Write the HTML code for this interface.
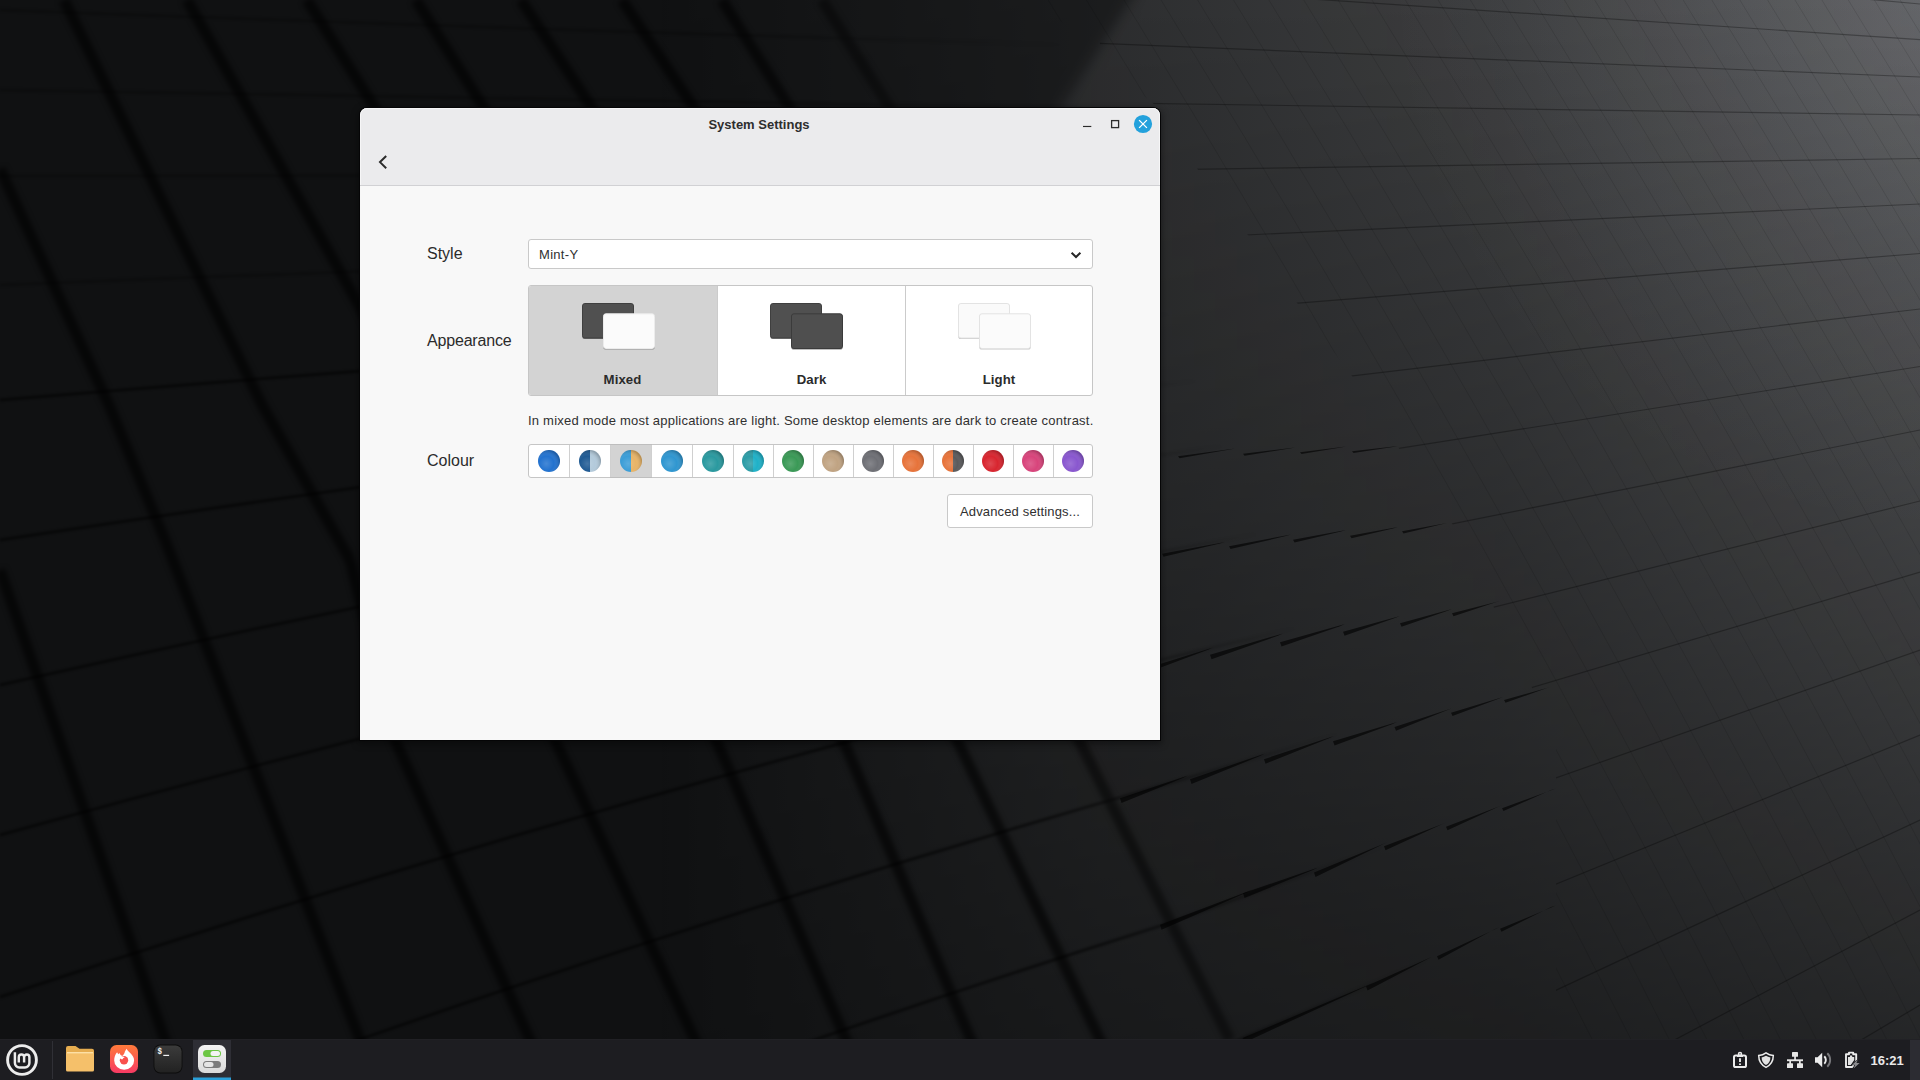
<!DOCTYPE html>
<html lang="en">
<head>
<meta charset="utf-8">
<title>System Settings</title>
<style>
*{box-sizing:border-box;margin:0;padding:0}
html,body{width:1920px;height:1080px;overflow:hidden;background:#101112;font-family:"Liberation Sans",sans-serif;color:#303030}
svg{position:absolute;left:0;top:0;width:1920px;height:1080px;display:block}
#win{position:absolute;left:360px;top:108px;width:800px;height:632px;background:#f8f8f8;border-radius:7px 7px 0 0;overflow:hidden}
#winsh{position:absolute;left:359px;top:107px;width:802px;height:634px;border-radius:8px 8px 0 0;background:#050506;box-shadow:0 2px 7px 1px rgba(0,0,0,.38)}
#hdr{position:absolute;left:0;top:0;width:800px;height:78px;background:#ebebed;border-bottom:1px solid #d1d1d4;border-radius:7px 7px 0 0;box-shadow:inset 0 1px 0 #f5f5f6,inset 1px 0 0 #f6f6f7,inset -1px 0 0 #f6f6f7}
#title{position:absolute;left:0;top:9px;width:798px;text-align:center;font-weight:bold;font-size:13px;color:#2e2e2e;line-height:16px}
.lbl{position:absolute;left:67px;font-size:16px;color:#2b2b2b;line-height:20px}
#combo{position:absolute;left:168px;top:131px;width:565px;height:30px;background:#fff;border:1px solid #c9c9c9;border-radius:3px}
#combo span{position:absolute;left:10px;top:7px;font-size:13px;letter-spacing:.3px;line-height:15px;color:#303030}
#app{position:absolute;left:168px;top:177px;width:565px;height:111px;background:#fff;border:1px solid #c6c6c6;border-radius:3px;overflow:hidden}
.ac{position:absolute;top:0;height:109px;border-left:1px solid #cbcbcb}
.ac b{position:absolute;left:0;right:0;top:86px;text-align:center;font-size:13.2px;letter-spacing:.1px;line-height:16px;color:#2b2b2b}
#desc{position:absolute;left:168px;top:305px;font-size:13px;letter-spacing:.222px;line-height:16px;white-space:nowrap;color:#303030}
#cols{position:absolute;left:168px;top:336px;width:565px;height:34px;background:#fff;border:1px solid #c6c6c6;border-radius:3px}
#adv{position:absolute;left:587px;top:386px;width:146px;height:34px;background:#fff;border:1px solid #c9c9c9;border-radius:3px;font-size:13px;letter-spacing:.15px;line-height:34px;text-align:center;color:#303030}
#panel{position:absolute;left:0;top:1039px;width:1920px;height:41px;background:#1d1d21;border-top:1px solid #212125}
#clock{position:absolute;left:1870.5px;top:13px;font-size:13px;font-weight:bold;color:#e9e9e9;line-height:16px}
</style>
</head>
<body>
<svg id="wall" viewBox="0 0 1920 1080">
<defs>
<linearGradient id="gx" gradientUnits="userSpaceOnUse" x1="641" y1="0" x2="1920" y2="0">
<stop offset="0" stop-color="#eeeff3" stop-opacity="0"/><stop offset=".359" stop-color="#eeeff3" stop-opacity=".13"/><stop offset=".672" stop-color="#eeeff3" stop-opacity=".203"/><stop offset="1" stop-color="#eeeff3" stop-opacity=".325"/></linearGradient>
<radialGradient id="gc" gradientUnits="userSpaceOnUse" cx="1940" cy="-20" r="560"><stop offset="0" stop-color="#e4e9fb" stop-opacity=".09"/><stop offset=".5" stop-color="#e4e9fb" stop-opacity=".035"/><stop offset="1" stop-color="#e4e9fb" stop-opacity="0"/></radialGradient>
<clipPath id="cfine"><polygon points="1040,0 1100,60 1160,109 1200,173 1251,239 1300,307 1352,376 1400,450 1453,525 1510,640 1556,740 1556,1080 1920,1080 1920,0"/></clipPath>
<linearGradient id="gy" gradientUnits="userSpaceOnUse" x1="0" y1="0" x2="0" y2="1080">
<stop offset="0" stop-color="#fff"/><stop offset="1" stop-color="#444"/></linearGradient>
<filter id="b12" x="-10%" y="-10%" width="120%" height="120%"><feGaussianBlur stdDeviation="7"/></filter>
<filter id="b3"><feGaussianBlur stdDeviation="1"/></filter>
<filter id="b1"><feGaussianBlur stdDeviation=".5"/></filter>
<filter id="b5"><feGaussianBlur stdDeviation="2.4"/></filter>
<mask id="mlit" maskUnits="userSpaceOnUse" x="0" y="0" width="1920" height="1080">
<rect width="1920" height="1080" fill="url(#gy)"/>
<polygon points="-50,-50 1164,-50 1059,110 640,750 400,1130 -50,1130" fill="#000" fill-opacity=".62" filter="url(#b12)"/>
</mask>
<linearGradient id="fadeL" gradientUnits="userSpaceOnUse" x1="720" y1="0" x2="1000" y2="-112">
<stop offset="0" stop-color="#fff"/><stop offset="1" stop-color="#000"/></linearGradient>
<mask id="mleft" maskUnits="userSpaceOnUse" x="0" y="0" width="1920" height="1080"><rect width="1920" height="1080" fill="url(#fadeL)"/></mask>
</defs>
<rect width="1920" height="1080" fill="#101112"/>
<rect width="1920" height="1080" fill="url(#gx)" mask="url(#mlit)"/>
<rect x="1300" y="0" width="620" height="620" fill="url(#gc)"/>
<g mask="url(#mleft)" fill="none" stroke="#040405"><g stroke-opacity=".6" stroke-width="11" filter="url(#b5)"><path d="M0 169 L109 405 L165 540"/><path d="M64 0 L262 405 L350 560"/><path d="M187 0 L360 307 L470 520"/><path d="M307 0 L375 108 L600 500"/><path d="M416 0 L484 108 L700 480"/><path d="M521 0 L592 108 L800 470"/><path d="M622 0 L694 108 L900 440"/><path d="M722 0 L790 108 L1000 430"/><path d="M822 0 L890 108 L1100 430"/><path d="M0 570 L165 1040 L180 1085"/><path d="M165 540 L360 1040 L378 1085"/><path d="M350 560 L395 740 L530 1040 L550 1085"/><path d="M470 520 L555 740 L695 1040 L716 1085"/><path d="M600 500 L717 742 L846 1040 L866 1085"/><path d="M700 480 L846 747 L971 1040 L990 1085"/><path d="M800 470 L958 742 L1100 1040 L1120 1085"/><path d="M900 440 L1080 742 L1230 1040"/></g><g stroke-opacity=".22" stroke-width="3" filter="url(#b3)"><path d="M0 10 Q580 31.4 1160 47.5 L1660 67.7"/><path d="M0 90 Q580 100.8 1160 109 L1660 115.3"/><path d="M0 176 Q580 175.4 1160 175 L1660 166.4"/><path d="M0 285 Q580 262.2 1160 245 L1660 220.7"/></g><g stroke-opacity=".5" stroke-width="3" filter="url(#b3)"><path d="M0 400 Q580 351.5 1160 315 L1660 274.9"/><path d="M0 540 Q580 451.6 1160 385 L1660 329.1"/><path d="M0 685 Q580 553.9 1160 455 L1660 383.4"/><path d="M0 835 Q580 673.7 1160 552 L1660 458.5"/><path d="M0 997 Q580 804.9 1160 660 L1660 542.2"/><path d="M0 1170 Q580 951.1 1160 786 L1660 639.8"/><path d="M0 1350 Q580 1108.3 1160 926 L1660 748.3"/><path d="M0 1540 Q580 1273.8 1160 1073 L1660 862.2"/></g></g>
<g fill="#070708" fill-opacity=".62" filter="url(#b1)"><polygon points="1178,456.2 1235,448.5 1230,449.62 1179.5,458.24"/><polygon points="1243,453.7 1295,447.5 1290,448.62 1244.5,455.74"/><polygon points="1300,452.2 1346,446.5 1341,447.558 1301.5,454.116"/><polygon points="1352,451.2 1398,446 1393,446.996 1353.5,452.992"/><polygon points="1162,553.7 1225,542 1220,543.616 1163.5,556.732"/><polygon points="1229,546.2 1291,534.5 1286,536.054 1230.5,549.108"/><polygon points="1293,539.7 1346,530 1341,531.492 1294.5,542.484"/><polygon points="1350,535.7 1398,527 1393,528.43 1351.5,538.36"/><polygon points="1402,531.2 1447,523 1442,524.306 1403.5,533.612"/><polygon points="1140,670.2 1213,647.5 1208,649.86 1141.5,674.72"/><polygon points="1210,654.7 1283,633.5 1278,635.86 1211.5,659.22"/><polygon points="1280,642.2 1345,624 1340,626.236 1281.5,646.472"/><polygon points="1343,631.7 1400,616 1395,618.112 1344.5,635.724"/><polygon points="1400,623.2 1452,609 1447,610.926 1401.5,626.852"/><polygon points="1452,613.2 1500,601 1495,602.616 1453.5,616.232"/><polygon points="1120,798.2 1188,775.5 1183,777.984 1121.5,802.968"/><polygon points="1190,779.2 1265,753.5 1260,755.984 1191.5,783.968"/><polygon points="1264,759.2 1334,736 1329,738.36 1265.5,763.72"/><polygon points="1333,741.2 1397,722 1392,724.236 1334.5,745.472"/><polygon points="1394.5,726.9 1452,708.2 1447,710.25 1396,730.8"/><polygon points="1451,712.7 1503,697.1 1498,698.902 1452.5,716.104"/><polygon points="1504,700 1552,686.5 1547,687.992 1505.5,702.784"/><polygon points="1160,924.8 1253,889.5 1248,892.046 1161.5,929.692"/><polygon points="1243,893.2 1318,867.5 1313,869.984 1244.5,897.968"/><polygon points="1314,872.6 1388,842 1383,844.36 1315.5,877.12"/><polygon points="1384,846.2 1447,822.2 1442,824.374 1385.5,850.348"/><polygon points="1446,826.7 1504,804.5 1499,806.426 1447.5,830.352"/><polygon points="1502,808.2 1556,788.5 1551,790.054 1503.5,811.108"/><polygon points="1160,1074.2 1250,1035.5 1245,1038.05 1161.5,1079.09"/><polygon points="1243,1037.7 1374,982.5 1369,984.984 1244.5,1042.47"/><polygon points="1366,986.2 1437,954.5 1432,956.736 1367.5,990.472"/><polygon points="1437,956.2 1500,927.1 1495,929.026 1438.5,959.852"/><polygon points="1500,928.8 1556,905.5 1551,907.054 1501.5,931.708"/></g>
<g fill="none" stroke="#000" clip-path="url(#cfine)"><g stroke-opacity=".11" stroke-width="1"><path d="M930 0 Q1263.2 540 1533.4 1080"/><path d="M970 0 Q1303.2 540 1573.4 1080"/><path d="M1009.4 0 Q1342.6 540 1612.8 1080"/><path d="M1048.2 0 Q1381.4 540 1651.6 1080"/><path d="M1086.4 0 Q1419.6 540 1689.8 1080"/><path d="M1124 0 Q1457.2 540 1727.4 1080"/><path d="M1161.1 0 Q1494.3 540 1764.5 1080"/><path d="M1197.6 0 Q1530.8 540 1801 1080"/><path d="M1233.5 0 Q1566.7 540 1836.9 1080"/><path d="M1268.9 0 Q1602.1 540 1872.3 1080"/><path d="M1303.8 0 Q1637 540 1907.2 1080"/><path d="M1338.1 0 Q1671.3 540 1941.5 1080"/><path d="M1372 0 Q1705.1 540 1975.3 1080"/><path d="M1405.3 0 Q1738.4 540 2008.6 1080"/><path d="M1438.1 0 Q1771.2 540 2041.4 1080"/><path d="M1470.4 0 Q1803.5 540 2073.7 1080"/><path d="M1502.2 0 Q1835.4 540 2105.5 1080"/><path d="M1533.5 0 Q1866.7 540 2136.9 1080"/><path d="M1564.4 0 Q1897.5 540 2167.7 1080"/><path d="M1594.7 0 Q1927.9 540 2198.1 1080"/><path d="M1624.7 0 Q1957.9 540 2228 1080"/><path d="M1654.1 0 Q1987.3 540 2257.5 1080"/><path d="M1683.2 0 Q2016.4 540 2286.6 1080"/><path d="M1711.8 0 Q2044.9 540 2315.1 1080"/><path d="M1739.9 0 Q2073.1 540 2343.3 1080"/><path d="M1767.6 0 Q2100.8 540 2371 1080"/><path d="M1795 0 Q2128.1 540 2398.3 1080"/><path d="M1821.9 0 Q2155 540 2425.2 1080"/><path d="M1848.3 0 Q2181.5 540 2451.7 1080"/><path d="M1874.4 0 Q2207.6 540 2477.8 1080"/><path d="M1900.1 0 Q2233.3 540 2503.5 1080"/><path d="M1925.4 0 Q2258.6 540 2528.8 1080"/><path d="M1950.3 0 Q2283.5 540 2553.7 1080"/><path d="M890 0 Q1223.2 540 1493.4 1080"/><path d="M848.8 0 Q1182 540 1452.2 1080"/><path d="M806.4 0 Q1139.6 540 1409.8 1080"/><path d="M762.8 0 Q1096 540 1366.2 1080"/><path d="M718 0 Q1051.2 540 1321.4 1080"/><path d="M672 0 Q1005.2 540 1275.4 1080"/><path d="M624.8 0 Q958 540 1228.2 1080"/><path d="M576.4 0 Q909.6 540 1179.8 1080"/><path d="M526.8 0 Q860 540 1130.2 1080"/><path d="M476 0 Q809.2 540 1079.4 1080"/><path d="M424 0 Q757.2 540 1027.4 1080"/><path d="M370.8 0 Q704 540 974.2 1080"/><path d="M316.4 0 Q649.6 540 919.8 1080"/><path d="M260.8 0 Q594 540 864.2 1080"/><path d="M204 0 Q537.2 540 807.4 1080"/><path d="M146 0 Q479.2 540 749.4 1080"/></g><g stroke-opacity=".3" stroke-width="1.2"><path d="M1100 -70.7 L1920 4"/><path d="M1100 -15.1 L1920 39.6"/><path d="M1100 43.3 L1920 77"/><path d="M1128 103.1 L1920 115"/><path d="M1156 169.8 L1920 158.5"/><path d="M1184 237.8 L1920 204"/><path d="M1212 310 L1920 253.5"/><path d="M1240 389.1 L1920 309"/><path d="M1268 469 L1920 366.5"/><path d="M1296 555.2 L1920 430"/><path d="M1324 649.6 L1920 501"/><path d="M1352 741.2 L1920 572"/><path d="M1380 839.7 L1920 650"/><path d="M1408 944.7 L1920 735"/><path d="M1436 1046.4 L1920 820"/><path d="M1464 1151.4 L1920 910"/><path d="M1492 1259.5 L1920 1005"/><path d="M1520 1363.8 L1920 1100"/></g></g>
</svg>

<div id="winsh"></div>
<div id="win">
  <div id="hdr">
    <div id="title">System Settings</div>
  </div>
  <div class="lbl" style="top:136px">Style</div>
  <div id="combo"><span>Mint-Y</span></div>
  <div class="lbl" style="top:223px;letter-spacing:-.18px">Appearance</div>
  <div id="app">
    <div class="ac" style="left:0;width:189px;background:#d3d3d3;border-left:0"><b style="left:-2px">Mixed</b></div>
    <div class="ac" style="left:188px;width:188px"><b>Dark</b></div>
    <div class="ac" style="left:376px;width:188px"><b style="left:-1px">Light</b></div>
  </div>
  <div id="desc">In mixed mode most applications are light. Some desktop elements are dark to create contrast.</div>
  <div class="lbl" style="top:343px">Colour</div>
  <div id="cols"></div>
  <div id="adv">Advanced settings...</div>
</div>

<div id="panel">
  <div id="clock">16:21</div>
</div>

<!-- overlay vector details, absolute page coordinates -->
<svg id="ov" viewBox="0 0 1920 1080">
<defs>
<radialGradient id="sph" cx=".38" cy=".62" r=".62">
<stop offset="0" stop-color="#fff" stop-opacity=".16"/><stop offset=".55" stop-color="#fff" stop-opacity="0"/><stop offset="1" stop-color="#000" stop-opacity=".2"/></radialGradient>
<filter id="cb" x="-10%" y="-10%" width="120%" height="130%"><feGaussianBlur stdDeviation=".7"/></filter>
<linearGradient id="ffx" x1="0" y1="0" x2="0" y2="1"><stop offset="0" stop-color="#ff7b3b"/><stop offset="1" stop-color="#f73a63"/></linearGradient>
<linearGradient id="trm" x1="0" y1="0" x2="0" y2="1"><stop offset="0" stop-color="#3b3b3b"/><stop offset="1" stop-color="#222"/></linearGradient>
<linearGradient id="stg" x1="0" y1="0" x2="0" y2="1"><stop offset="0" stop-color="#f4f4f4"/><stop offset="1" stop-color="#dadada"/></linearGradient>
</defs>
<!-- back arrow -->
<path d="M386.2 156 L380 162.1 L386.2 168.2" fill="none" stroke="#2b2b2b" stroke-width="2"/>
<!-- window buttons -->
<rect x="1083" y="125.900" width="8.300" height="1.150" fill="#2b2b2b"/>
<rect x="1111.6" y="120.6" width="7" height="7" fill="none" stroke="#2b2b2b" stroke-width="1.3"/>
<circle cx="1143" cy="124" r="9.1" fill="#23a1dc"/>
<path d="M1139.100 120.100 L1146.900 127.900 M1146.900 120.100 L1139.100 127.900" stroke="#fff" stroke-width="1.300" fill="none"/>
<!-- combo arrow -->
<path d="M1071.6 252.7 L1076 257 L1080.4 252.7" fill="none" stroke="#262626" stroke-width="2"/>
<rect x="582.3" y="304.2" width="51.4" height="34.9" rx="2.6" fill="#000" fill-opacity="0.45" filter="url(#cb)"/><rect x="582.5" y="303.5" width="51" height="34.5" rx="2.4" fill="#505050" stroke="#3f3f3f" stroke-width="1"/><rect x="603.3" y="314.5" width="51.4" height="35.1" rx="2.6" fill="#000" fill-opacity="0.32" filter="url(#cb)"/><rect x="603.5" y="313.8" width="51" height="34.7" rx="2.4" fill="#fbfbfb" stroke="#ececec" stroke-width="1"/><rect x="770.3" y="304.2" width="51.4" height="34.9" rx="2.6" fill="#000" fill-opacity="0.45" filter="url(#cb)"/><rect x="770.5" y="303.5" width="51" height="34.5" rx="2.4" fill="#505050" stroke="#3f3f3f" stroke-width="1"/><rect x="791.3" y="314.5" width="51.4" height="35.1" rx="2.6" fill="#000" fill-opacity="0.5" filter="url(#cb)"/><rect x="791.5" y="313.8" width="51" height="34.7" rx="2.4" fill="#4f4f4f" stroke="#3b3b3b" stroke-width="1"/><rect x="958.3" y="304.2" width="51.4" height="34.9" rx="2.6" fill="#000" fill-opacity="0.22" filter="url(#cb)"/><rect x="958.5" y="303.5" width="51" height="34.5" rx="2.4" fill="#fafafa" stroke="#e3e3e3" stroke-width="1"/><rect x="979.3" y="314.5" width="51.4" height="35.1" rx="2.6" fill="#000" fill-opacity="0.22" filter="url(#cb)"/><rect x="979.5" y="313.8" width="51" height="34.7" rx="2.4" fill="#fbfbfb" stroke="#e3e3e3" stroke-width="1"/>
<rect x="610.5" y="444.5" width="41" height="33" fill="#d3d3d3" stroke="#bebebe" stroke-width="1"/><rect x="569" y="445" width="1" height="32" fill="#d0d0d0"/><rect x="610" y="445" width="1" height="32" fill="#d0d0d0"/><rect x="651" y="445" width="1" height="32" fill="#d0d0d0"/><rect x="692" y="445" width="1" height="32" fill="#d0d0d0"/><rect x="733" y="445" width="1" height="32" fill="#d0d0d0"/><rect x="773" y="445" width="1" height="32" fill="#d0d0d0"/><rect x="813" y="445" width="1" height="32" fill="#d0d0d0"/><rect x="853" y="445" width="1" height="32" fill="#d0d0d0"/><rect x="893" y="445" width="1" height="32" fill="#d0d0d0"/><rect x="933" y="445" width="1" height="32" fill="#d0d0d0"/><rect x="973" y="445" width="1" height="32" fill="#d0d0d0"/><rect x="1013" y="445" width="1" height="32" fill="#d0d0d0"/><rect x="1053" y="445" width="1" height="32" fill="#d0d0d0"/><circle cx="549" cy="461" r="11" fill="#2272cf"/><circle cx="549" cy="461" r="11" fill="url(#sph)"/><path d="M590 450a11 11 0 0 0 0 22z" fill="#1f5a93"/><path d="M590 450a11 11 0 0 1 0 22z" fill="#b3cadb"/><circle cx="590" cy="461" r="11" fill="url(#sph)"/><path d="M631 450a11 11 0 0 0 0 22z" fill="#3b9dd7"/><path d="M631 450a11 11 0 0 1 0 22z" fill="#e8b467"/><circle cx="631" cy="461" r="11" fill="url(#sph)"/><circle cx="672" cy="461" r="11" fill="#2f96d0"/><circle cx="672" cy="461" r="11" fill="url(#sph)"/><circle cx="713" cy="461" r="11" fill="#2a999f"/><circle cx="713" cy="461" r="11" fill="url(#sph)"/><path d="M753 450a11 11 0 0 0 0 22z" fill="#2c9ca6"/><path d="M753 450a11 11 0 0 1 0 22z" fill="#1fb1c8"/><circle cx="753" cy="461" r="11" fill="url(#sph)"/><circle cx="793" cy="461" r="11" fill="#3a9956"/><circle cx="793" cy="461" r="11" fill="url(#sph)"/><circle cx="833" cy="461" r="11" fill="#c0a382"/><circle cx="833" cy="461" r="11" fill="url(#sph)"/><circle cx="873" cy="461" r="11" fill="#6e6f75"/><circle cx="873" cy="461" r="11" fill="url(#sph)"/><circle cx="913" cy="461" r="11" fill="#e7733a"/><circle cx="913" cy="461" r="11" fill="url(#sph)"/><path d="M953 450a11 11 0 0 0 0 22z" fill="#e7733a"/><path d="M953 450a11 11 0 0 1 0 22z" fill="#5a5a5c"/><circle cx="953" cy="461" r="11" fill="url(#sph)"/><circle cx="993" cy="461" r="11" fill="#d8252f"/><circle cx="993" cy="461" r="11" fill="url(#sph)"/><circle cx="1033" cy="461" r="11" fill="#d8447b"/><circle cx="1033" cy="461" r="11" fill="url(#sph)"/><circle cx="1073" cy="461" r="11" fill="#8957cf"/><circle cx="1073" cy="461" r="11" fill="url(#sph)"/>

<!-- panel -->
<rect x="193" y="1040" width="38" height="40" fill="#2e2e35"/>
<rect x="193" y="1077.5" width="38" height="2.5" fill="#2a9fd9"/>
<rect x="1910" y="1040" width="10" height="40" fill="#2c2c32"/>
<rect x="52" y="1041" width="1" height="38" fill="#303036"/>
<!-- mint logo -->
<g fill="none" stroke="#ececec">
<circle cx="22" cy="1060" r="14.4" stroke-width="2.9"/>
<path d="M14.9 1052.2 V1063 a4.4 4.4 0 0 0 4.4 4.4 h5.7 a4.4 4.4 0 0 0 4.4 -4.4 V1057.2 a2.65 2.65 0 0 0 -5.3 0 V1062.4 M24.1 1057.2 a2.65 2.65 0 0 0 -5.3 0 V1062.4" stroke-width="2.450"/>
</g>
<!-- folder -->
<path d="M66 1048 a2 2 0 0 1 2 -2 h7.5 l4 2.8 h12.5 a2 2 0 0 1 2 2 v8 h-28z" fill="#e6ad50"/>
<rect x="66" y="1052" width="28" height="19.5" rx="1.6" fill="#f5c06a"/>
<rect x="67" y="1052" width="26" height="1.4" fill="#fde0a6"/>
<!-- firefox -->
<rect x="110" y="1045" width="28" height="28" rx="6.5" fill="url(#ffx)"/>
<path d="M117.100 1052.300 L118.250 1054.300 L119.400 1053 L120.600 1055 C121.200 1055.800 122.300 1056 123 1055.500 C123.500 1054.700 124 1053.800 124.500 1053 C124.800 1051.500 125.700 1049.900 126.700 1048.800 C127.300 1050.500 128.800 1051.800 130.200 1053.100 C132.500 1055.300 134.100 1057.800 134.100 1060.400 A9.950 9.300 0 0 1 114.200 1060.400 C114.200 1057.400 115.200 1054.600 117.100 1052.300Z" fill="#fff"/>
<circle cx="124" cy="1060.200" r="4.200" fill="#f9514e"/>
<path d="M119.300 1057.600 C120.800 1056.300 123.200 1056.200 124.900 1057.300 C123.700 1057.600 123 1058.300 122.700 1059.300 C121.400 1059.500 120.100 1058.900 119.300 1057.600Z" fill="#fff"/>
<!-- terminal -->
<rect x="153.6" y="1044.6" width="28.8" height="28.8" rx="6.8" fill="#0c0c0c"/>
<rect x="154.4" y="1045.4" width="27.2" height="27.2" rx="6" fill="url(#trm)"/>
<text transform="translate(157.500 1054.300) scale(.8 1)" font-family="Liberation Mono, monospace" font-weight="bold" font-size="9.400" fill="#f2f2f2">$</text>
<rect x="163.3" y="1054.8" width="5.8" height="1.2" fill="#f2f2f2"/>
<!-- settings -->
<rect x="198" y="1045" width="28" height="28" rx="6.5" fill="url(#stg)"/>
<rect x="203" y="1050" width="18" height="7" rx="3.5" fill="#6cc644"/>
<rect x="210.500" y="1051" width="9.5" height="5" rx="2.5" fill="#f3f3f3"/>
<rect x="203" y="1061" width="18" height="7" rx="3.5" fill="#7b7b7b"/>
<rect x="204" y="1062" width="9.5" height="5" rx="2.5" fill="#e4e4e4"/>
<!-- tray: notes -->
<g fill="none" stroke="#ececec">
<rect x="1734" y="1055.5" width="12" height="11.600" rx="1.6" stroke-width="2"/>
<path d="M1737 1056.2 h6" stroke-width="1.6"/>
<circle cx="1740" cy="1054" r="1.500" stroke-width="1.500"/>
<path d="M1740 1058.300 v3.700 M1740 1063.400 v1.700" stroke-width="1.900"/>
</g>
<!-- tray: shield -->
<path d="M1766 1052.800 c2.300 1.600 4.600 2.400 7.300 2.700 c0 5.500-2.400 9.400-7.300 11.900 c-4.900-2.500-7.300-6.400-7.300-11.900 c2.700-.3 5-1.100 7.300-2.700z" fill="none" stroke="#ececec" stroke-width="1.500"/>
<path d="M1766 1055.800 c1.400.9 2.800 1.400 4.400 1.600 c-.1 3.500-1.500 5.900-4.400 7.500 c-2.900-1.600-4.300-4-4.400-7.500 c1.600-.2 3-.7 4.400-1.600z" fill="#e2e2e2"/>
<!-- tray: network -->
<g fill="#e6e6e6">
<rect x="1792" y="1052" width="6" height="4.800" rx=".6"/>
<rect x="1794.200" y="1056" width="1.700" height="4"/>
<rect x="1787" y="1059.300" width="16" height="1.900"/>
<rect x="1789.300" y="1060" width="1.700" height="4"/>
<rect x="1799" y="1060" width="1.700" height="4"/>
<rect x="1787" y="1063.200" width="6" height="4.900" rx=".6"/>
<rect x="1797" y="1063.200" width="6" height="4.900" rx=".6"/>
</g>
<!-- tray: volume -->
<path d="M1815 1057.200 h2.600 l4.600-4.500 v14.600 l-4.600-4.500 h-2.600z" fill="#ececec"/>
<path d="M1824.300 1056.300 a5.200 5.200 0 0 1 0 7.400" fill="none" stroke="#ececec" stroke-width="1.900"/>
<path d="M1827.300 1053.300 a9.300 9.300 0 0 1 0 13.400" fill="none" stroke="#77777b" stroke-width="1.900"/>
<!-- tray: battery -->
<path d="M1846 1054.200 h3 v-1.600 h4.200 v1.600 h3 v7 l-4 5.800 h-6.200z" fill="none" stroke="#ececec" stroke-width="1.900" stroke-linejoin="round"/>
<path d="M1848 1057 h2 v-1.400 h2.200 v1.400 h2 v3 l-3.400 5 h-2.800z" fill="#e2e2e2"/>
<path d="M1857.700 1059.900 L1852 1064.800 H1855.200 L1853.600 1068.500 L1859.600 1063.100 H1856.400z" fill="#8b8b8e" stroke="#1d1d21" stroke-width="1.100" paint-order="stroke"/>
</svg>
</body>
</html>
